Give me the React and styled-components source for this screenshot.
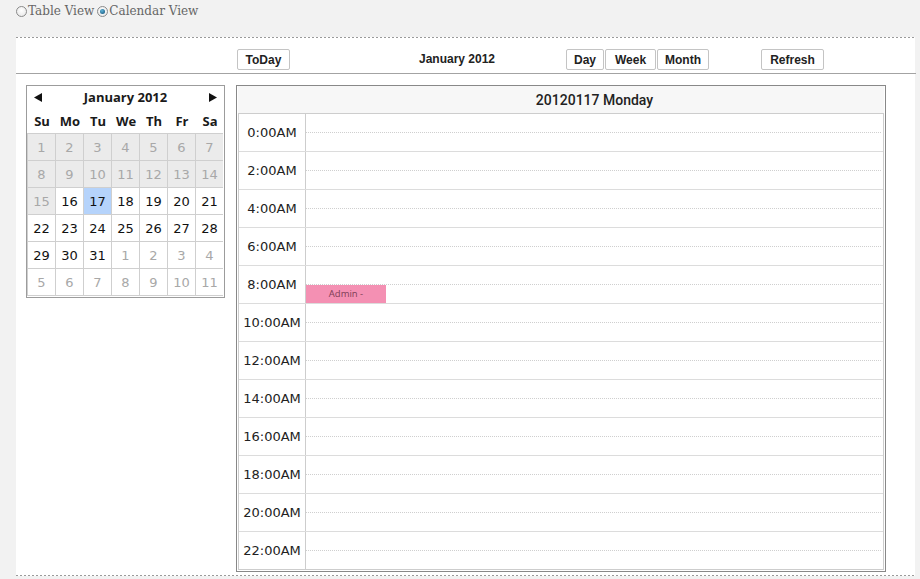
import React from "react";
import styled, { createGlobalStyle } from "styled-components";

const GlobalStyle = createGlobalStyle`
  html, body { margin: 0; padding: 0; }
  body { background: #f2f2f2; font-family: "Liberation Sans", Arial, sans-serif; }
  * { box-sizing: border-box; }
`;

const Page = styled.div`
  width: 920px;
  height: 579px;
  overflow: hidden;
`;

const RadioBar = styled.div`
  display: flex;
  align-items: center;
  height: 22px;
  padding-left: 16px;
  font-family: "DejaVu Serif", Georgia, serif;
  font-size: 12px;
  color: #666;
`;

const RadioLabel = styled.label`
  display: inline-flex;
  align-items: center;
  margin-right: 3px;
`;

const RadioDot = styled.span`
  width: 11px;
  height: 11px;
  border-radius: 50%;
  border: 1px solid #8a8a8a;
  background: radial-gradient(circle at 50% 40%, #fff 0%, #e4e4e4 100%);
  display: inline-flex;
  align-items: center;
  justify-content: center;
  margin-right: 1px;
  &::after {
    content: "";
    display: ${(p) => (p.$checked ? "block" : "none")};
    width: 5px;
    height: 5px;
    border-radius: 50%;
    background: radial-gradient(circle at 40% 35%, #5fb3d8 0%, #1c5f86 80%);
  }
`;

const Panel = styled.div`
  margin: 15px 0 0 16px;
  width: 899px;
  background: #fff;
`;

const Dots = styled.div`
  height: 1px;
  background-image: linear-gradient(to right, #9a9a9a 50%, transparent 50%);
  background-size: 4px 1px;
  background-repeat: repeat-x;
`;

const Toolbar = styled.div`
  display: flex;
  align-items: flex-start;
  height: 36px;
  padding: 11px 0 0 221px;
  border-bottom: 1px solid #a3a3a3;
  margin-right: -1px;
`;

const Btn = styled.button`
  height: 21px;
  width: ${(p) => p.$w}px;
  margin-left: ${(p) => p.$ml || 0}px;
  padding: 0;
  background: #fff;
  border: 1px solid #c4c4c4;
  border-radius: 2px;
  font-family: "Liberation Sans", Arial, sans-serif;
  font-weight: bold;
  font-size: 12px;
  color: #222;
  cursor: pointer;
`;

const ToolTitle = styled.div`
  width: 154px;
  margin-left: 90px;
  text-align: center;
  font-weight: bold;
  font-size: 12px;
  color: #222;
  line-height: 21px;
`;

const BtnGroup = styled.div`
  display: flex;
  gap: 1px;
  margin-left: 32px;
`;

const Content = styled.div`
  display: flex;
  align-items: flex-start;
  gap: 11px;
  padding: 11px 0 3px 10px;
`;

const MiniCal = styled.div`
  width: 199px;
  border: 1px solid #9c9c9c;
  padding: 0 1px 1px 0;
  background: #fff;
  font-family: "Open Sans", "DejaVu Sans", sans-serif;
  color: #1a1a1a;
`;

const MiniHead = styled.div`
  height: 22px;
  display: flex;
  align-items: center;
  justify-content: space-between;
  padding: 0 6px 0 7px;
  font-weight: bold;
  font-size: 13px;
`;

const Arrow = styled.svg`
  width: 8px;
  height: 9px;
  display: block;
`;

const DayNames = styled.div`
  display: grid;
  grid-template-columns: repeat(7, 28px);
  height: 25px;
  align-items: center;
  padding-left: 1px;
  font-weight: bold;
  font-size: 13px;
  text-align: center;
`;

const DayGrid = styled.div`
  display: grid;
  grid-template-columns: repeat(7, 27px);
  grid-auto-rows: 26px;
  gap: 1px;
  background: #cfcfcf;
  border: 1px solid #cfcfcf;
`;

const cellBg = { past: "#ebebeb", cur: "#fff", sel: "#b5d3fb", other: "#fff" };
const cellColor = { past: "#a8a8a8", cur: "#111", sel: "#111", other: "#a8a8a8" };

const Cell = styled.div`
  display: flex;
  align-items: center;
  justify-content: center;
  font-family: "DejaVu Sans", sans-serif;
  font-size: 13px;
  background: ${(p) => cellBg[p.$kind]};
  color: ${(p) => cellColor[p.$kind]};
`;

const DayView = styled.div`
  width: 650px;
  border: 1px solid #888;
  padding: 0 1px 1px 1px;
  background: #fff;
`;

const DayHead = styled.div`
  height: 27px;
  padding-left: 67px;
  display: flex;
  align-items: center;
  justify-content: center;
  background: #f7f7f7;
  font-family: Roboto, "Liberation Sans", sans-serif;
  font-weight: 500;
  font-size: 14px;
  color: #222;
`;

const Table = styled.div`
  border: 1px solid #cdcdcd;
`;

const Row = styled.div`
  display: flex;
  height: 38px;
  border-bottom: 1px solid #dcdcdc;
  &:last-child {
    height: 37px;
    border-bottom: none;
  }
`;

const TimeCell = styled.div`
  width: 67px;
  flex: none;
  border-right: 1px solid #cdcdcd;
  display: flex;
  align-items: center;
  justify-content: center;
  padding-bottom: 1px;
  font-family: "DejaVu Sans", sans-serif;
  font-size: 13px;
  color: #222;
`;

const Slot = styled.div`
  flex: 1;
  position: relative;
  &::after {
    content: "";
    position: absolute;
    left: 0;
    right: 2px;
    top: 18px;
    height: 1px;
    background-image: linear-gradient(to right, #cfcfcf 50%, transparent 50%);
    background-size: 2px 1px;
  }
`;

const Event = styled.div`
  position: absolute;
  left: 0;
  top: 19px;
  width: 80px;
  height: 18px;
  z-index: 1;
  background: #f490b3;
  color: #7d3e57;
  font-family: "Open Sans", "DejaVu Sans", sans-serif;
  font-size: 9.5px;
  line-height: 18px;
  text-align: center;
`;

const times = ["0:00AM", "2:00AM", "4:00AM", "6:00AM", "8:00AM", "10:00AM", "12:00AM", "14:00AM", "16:00AM", "18:00AM", "20:00AM", "22:00AM"];

const weeks = [
  [1, 2, 3, 4, 5, 6, 7].map((d) => [d, "past"]),
  [8, 9, 10, 11, 12, 13, 14].map((d) => [d, "past"]),
  [[15, "past"], [16, "cur"], [17, "sel"], [18, "cur"], [19, "cur"], [20, "cur"], [21, "cur"]],
  [22, 23, 24, 25, 26, 27, 28].map((d) => [d, "cur"]),
  [[29, "cur"], [30, "cur"], [31, "cur"], [1, "other"], [2, "other"], [3, "other"], [4, "other"]],
  [5, 6, 7, 8, 9, 10, 11].map((d) => [d, "other"]),
];

export default function App() {
  return (
    <Page>
      <GlobalStyle />
      <RadioBar>
        <RadioLabel><RadioDot />Table View</RadioLabel>
        <RadioLabel><RadioDot $checked />Calendar View</RadioLabel>
      </RadioBar>
      <Panel>
        <Dots />
        <Toolbar>
          <Btn $w={53}>ToDay</Btn>
          <ToolTitle>January 2012</ToolTitle>
          <BtnGroup>
            <Btn $w={38}>Day</Btn>
            <Btn $w={51}>Week</Btn>
            <Btn $w={52}>Month</Btn>
          </BtnGroup>
          <Btn $w={63} $ml={52}>Refresh</Btn>
        </Toolbar>
        <Content>
          <MiniCal>
            <MiniHead>
              <Arrow viewBox="0 0 8 9"><polygon points="8,0 8,9 0,4.5" fill="#111" /></Arrow>
              <span>January 2012</span>
              <Arrow viewBox="0 0 8 9"><polygon points="0,0 0,9 8,4.5" fill="#111" /></Arrow>
            </MiniHead>
            <DayNames>
              {["Su", "Mo", "Tu", "We", "Th", "Fr", "Sa"].map((d) => <span key={d}>{d}</span>)}
            </DayNames>
            <DayGrid>
              {weeks.flat().map(([d, k], i) => (
                <Cell key={i} $kind={k}>{d}</Cell>
              ))}
            </DayGrid>
          </MiniCal>
          <DayView>
            <DayHead>20120117 Monday</DayHead>
            <Table>
              {times.map((t) => (
                <Row key={t}>
                  <TimeCell>{t}</TimeCell>
                  <Slot>{t === "8:00AM" && <Event>Admin -</Event>}</Slot>
                </Row>
              ))}
            </Table>
          </DayView>
        </Content>
        <Dots />
      </Panel>
    </Page>
  );
}
